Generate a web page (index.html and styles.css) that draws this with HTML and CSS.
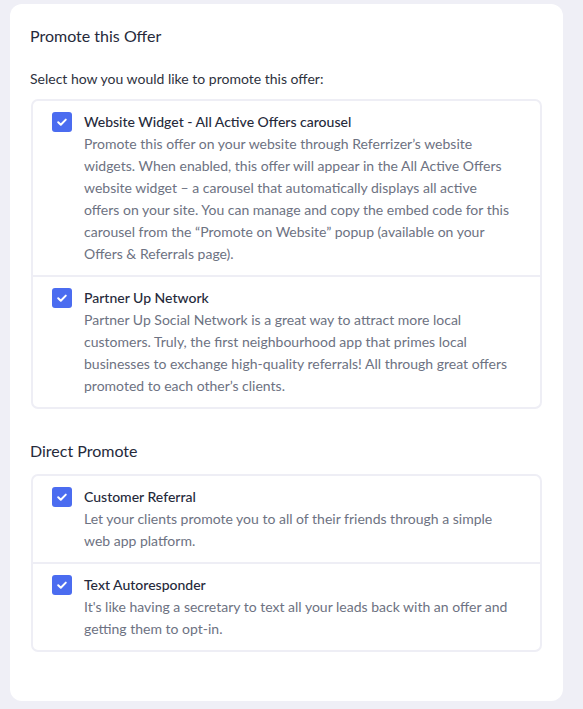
FILE: index.html
```html
<!DOCTYPE html>
<html lang="en">
<head>
<meta charset="utf-8">
<title>Promote this Offer</title>
<link rel="stylesheet" href="styles.css">
</head>
<body>
<div class="card">
  <h2 class="card-title">Promote this Offer</h2>
  <p class="lead">Select how you would like to promote this offer:</p>
  <ul class="options">
    <li class="option">
      <span class="check"><svg viewBox="0 0 20 20" width="20" height="20"><path d="M6.2 10.3l2.6 2.5 5-5.2" fill="none" stroke="#fff" stroke-width="2" stroke-linecap="round" stroke-linejoin="round"/></svg></span>
      <div class="option-body">
        <div class="option-title">Website Widget - All Active Offers carousel</div>
        <div class="option-desc">Promote this offer on your website through Referrizer’s website widgets. When enabled, this offer will appear in the All Active Offers website widget – a carousel that automatically displays all active offers on your site. You can manage and copy the embed code for this carousel from the “Promote on Website” popup (available on your Offers &amp; Referrals page).</div>
      </div>
    </li>
    <li class="option">
      <span class="check"><svg viewBox="0 0 20 20" width="20" height="20"><path d="M6.2 10.3l2.6 2.5 5-5.2" fill="none" stroke="#fff" stroke-width="2" stroke-linecap="round" stroke-linejoin="round"/></svg></span>
      <div class="option-body">
        <div class="option-title">Partner Up Network</div>
        <div class="option-desc">Partner Up Social Network is a great way to attract more local customers. Truly, the first neighbourhood app that primes local businesses to exchange high-quality referrals! All through great offers promoted to each other’s clients.</div>
      </div>
    </li>
  </ul>

  <h3 class="section-title">Direct Promote</h3>
  <ul class="options">
    <li class="option">
      <span class="check"><svg viewBox="0 0 20 20" width="20" height="20"><path d="M6.2 10.3l2.6 2.5 5-5.2" fill="none" stroke="#fff" stroke-width="2" stroke-linecap="round" stroke-linejoin="round"/></svg></span>
      <div class="option-body">
        <div class="option-title">Customer Referral</div>
        <div class="option-desc">Let your clients promote you to all of their friends through a simple web app platform.</div>
      </div>
    </li>
    <li class="option">
      <span class="check"><svg viewBox="0 0 20 20" width="20" height="20"><path d="M6.2 10.3l2.6 2.5 5-5.2" fill="none" stroke="#fff" stroke-width="2" stroke-linecap="round" stroke-linejoin="round"/></svg></span>
      <div class="option-body">
        <div class="option-title">Text Autoresponder</div>
        <div class="option-desc">It's like having a secretary to text all your leads back with an offer and getting them to opt-in.</div>
      </div>
    </li>
  </ul>
</div>
</body>
</html>
```

FILE: styles.css
```css
* { box-sizing: border-box; }

html, body {
  margin: 0;
  padding: 0;
  background: #efeff6;
}

body {
  padding: 4px 20px 8px 10px;
  font-family: "Lato", "Noto Sans", sans-serif;
  color: #262a3b;
}

.card {
  width: 553px;
  height: 697px;
  background: #ffffff;
  border-radius: 12px;
  padding: 22px 20px 20px 20px;
}

.card-title {
  margin: 0;
  font-size: 16px;
  font-weight: 400;
  line-height: 20px;
  color: #262a3b;
}

.lead {
  margin: 23px 0 10px 0;
  font-size: 14px;
  line-height: 20px;
  color: #2e3240;
}

.options {
  list-style: none;
  margin: 0 0 0 1px;
  padding: 0;
  width: 511px;
  border: 2px solid #eeeef5;
  border-radius: 7px;
}

.option {
  display: flex;
  gap: 12px;
  padding: 10px 19px 10px 19px;
}

.option + .option {
  border-top: 2px solid #eeeef5;
}

.check {
  flex: none;
  width: 20px;
  height: 20px;
  margin-top: 1px;
  border-radius: 3px;
  background: #4b6cf0;
  display: flex;
}

.option-body {
  flex: 1;
  font-size: 14px;
  line-height: 22px;
}

.option-title {
  color: #262a3b;
  font-weight: 500;
}

.option-desc {
  max-width: 426px;
  color: #6d7282;
}

.section-title {
  margin: 31px 0 12px 0;
  font-size: 16px;
  font-weight: 400;
  line-height: 22px;
  color: #262a3b;
}
```
